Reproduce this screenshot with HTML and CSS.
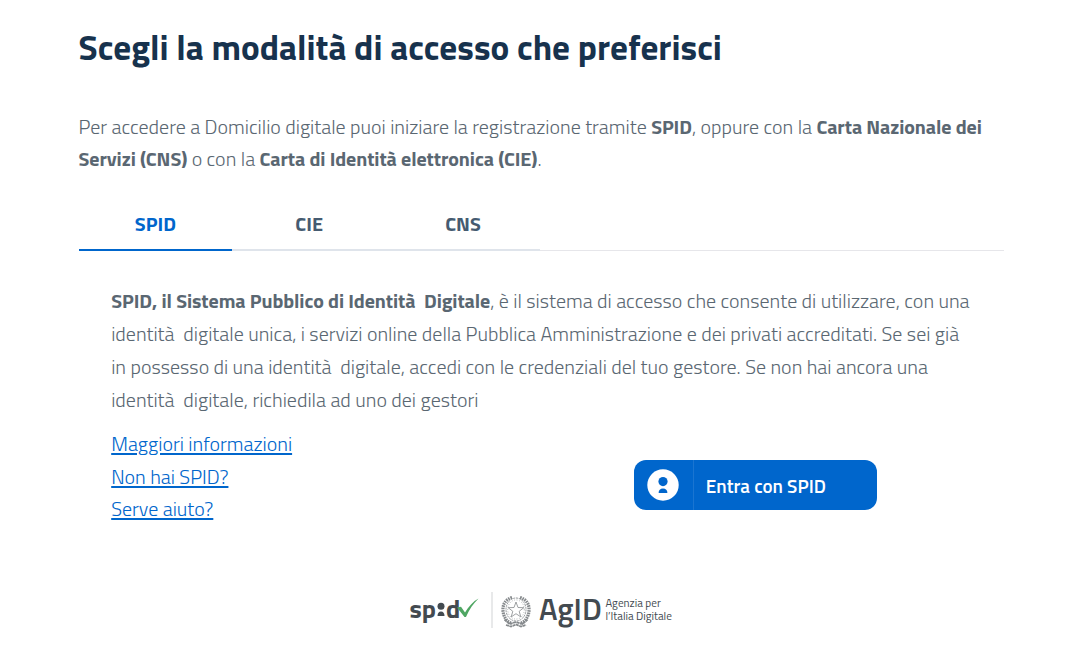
FILE: index.html
```
<!DOCTYPE html>
<html lang="it">
<head>
    <meta charset="UTF-8">
    <meta name="viewport" content="width=device-width, initial-scale=1.0">
    <title>Domicilio digitale - Accesso</title>
    <link rel="stylesheet" href="styles.css">
</head>
<body>
    <main class="container">
        <h1>Scegli la modalità di accesso che preferisci</h1>
        <p class="intro">
            Per accedere a Domicilio digitale puoi iniziare la registrazione tramite <strong>SPID</strong>, oppure con la <strong>Carta Nazionale dei Servizi (CNS)</strong> o con la <strong>Carta di Identità elettronica (CIE)</strong>.
        </p>

        <ul class="tabs">
            <li class="tab active">SPID</li>
            <li class="tab">CIE</li>
            <li class="tab">CNS</li>
        </ul>

        <section class="panel">
            <p class="description">
                <strong>SPID, il Sistema Pubblico di Identità&nbsp; Digitale</strong>, è il sistema di accesso che consente di utilizzare, con una identità&nbsp; digitale unica, i servizi online della Pubblica Amministrazione e dei privati accreditati. Se sei già in possesso di una identità&nbsp; digitale, accedi con le credenziali del tuo gestore. Se non hai ancora una identità&nbsp; digitale, richiedila ad uno dei gestori
            </p>
            <div class="actions">
                <ul class="links">
                    <li><a href="#">Maggiori informazioni</a></li>
                    <li><a href="#">Non hai SPID?</a></li>
                    <li><a href="#">Serve aiuto?</a></li>
                </ul>
                <button type="button" class="btn">
                    <span class="btn-icon">
                        <svg width="32" height="32" viewBox="0 0 32 32">
                            <circle cx="16" cy="16" r="15.7" fill="#fff"/>
                            <circle cx="16" cy="12.6" r="4.6" fill="#06c"/>
                            <path d="M11.6 24c0-3 1.600-4.600 4.400-4.600s4.400 1.600 4.400 4.600z" fill="#06c"/>
                        </svg>
                    </span>
                    <span class="btn-label">Entra con SPID</span>
                </button>
            </div>
        </section>
    </main>

    <footer class="logos">
        <div class="spid">
            <span>sp</span>
            <svg class="spid-i" width="8" height="15" viewBox="0 0 8 15">
                <circle cx="4" cy="4.200" r="3.500" fill="#434a50"/>
                <path d="M.5 14c0-3 1.300-4.500 3.500-4.500s3.500 1.500 3.500 4.500z" fill="#434a50"/>
            </svg>
            <span>d</span>
            <svg class="check" width="22" height="20" viewBox="0 0 22 20">
                <path d="M0 9.500l4-.8 4 5.800C11.500 8.500 16 3.500 21.500.5 16.500 5.500 12 11.500 9 19H7.500z" fill="#4fa663"/>
            </svg>
        </div>
        <div class="separator"></div>
        <svg class="emblem" width="30" height="34" viewBox="0 0 30 34" fill="none" stroke="#85898c">
            <path d="M11 3.500C4 5.500 1.500 11 2 17s4 11 9 12.500M19 3.500c7 2 9.500 7.500 9 13.500s-4 11-9 12.500" stroke-width="3.200" stroke-dasharray="1.600 .8"/>
            <ellipse cx="15" cy="15.500" rx="10" ry="11.500" stroke-width=".9" stroke-dasharray="2 .8"/>
            <ellipse cx="15" cy="15.500" rx="8.300" ry="9.600" stroke-width=".6" stroke-dasharray="1 1.500"/>
            <path d="M15 8l2 5.500 5.800.2-4.600 3.600 1.600 5.600-4.800-3.200-4.800 3.200 1.600-5.600-4.600-3.600 5.800-.2z" stroke-width=".8"/>
            <path d="M3.500 25.500l5 4.500 6.500-2 6.500 2 5-4.500M5 31l5 1.500 5-2 5 2 5-1.500" stroke-width="1.800" stroke-dasharray="3 .5"/>
        </svg>
        <div class="agid">AgID</div>
        <div class="agency"><div>Agenzia per</div><div>l’Italia Digitale</div></div>
    </footer>
</body>
</html>
```

FILE: styles.css
```
* {
    box-sizing: border-box;
}
body {
    margin: 0;
    background-color: #fff;
    color: #5a6772;
    font-family: "Titillium Web", Roboto, sans-serif;
    font-size: 20px;
    font-weight: 300;
    line-height: 32.8px;
}
h1, p, ul {
    margin: 0;
    padding: 0;
}
ul {
    list-style: none;
}
strong {
    font-weight: 700;
    letter-spacing: -0.09px;
}
.container {
    width: 925px;
    margin-left: 78.500px;
    padding-top: 23px;
}
h1 {
    color: #17324d;
    font-size: 35.200px;
    font-weight: 700;
    line-height: 48px;
}
.intro {
    margin-top: 39.500px;
}
.tabs {
    display: flex;
    margin-top: 22px;
    height: 53px;
    box-shadow: inset 0 -1px #e6e6ea;
}
.tab {
    width: 153.800px;
    padding-top: 10px;
    text-align: center;
    font-weight: 700;
    color: #455b71;
    border-bottom: 2px solid #dfe4eb;
}
.tab.active {
    color: #06c;
    border-bottom-color: #06c;
}
.panel {
    padding: 32.700px 32.700px 0;
}
.description {
    margin-right: -3px;
    line-height: 33px;
}
.actions {
    display: flex;
    justify-content: space-between;
    margin-top: 12px;
}
.links {
    width: 400px;
}
.links a {
    color: #06c;
    text-decoration-thickness: 2px;
    text-underline-offset: 2px;
}
.btn {
    display: flex;
    width: 243px;
    height: 50px;
    margin: 32.600px 94px 0 0;
    padding: 0;
    border: none;
    border-radius: 12px;
    background-color: #06c;
    color: #fff;
    font: inherit;
    font-size: 19px;
    font-weight: 600;
    cursor: pointer;
}
.btn-icon {
    display: flex;
    align-items: center;
    justify-content: center;
    width: 60px;
    height: 50px;
    border-right: 1px solid #1a75d1;
}
.btn-label {
    padding-left: 12px;
    line-height: 51px;
}
.logos {
    display: flex;
    margin: 66px 0 0 409.500px;
    height: 36px;
    color: #434a50;
    white-space: nowrap;
}
.spid {
    display: flex;
    width: 81.500px;
    font-size: 26px;
    font-weight: 700;
    line-height: 33px;
}
.spid-i {
    margin: 10px 1px 0;
}
.check {
    margin: 6px 0 0 -3px;
}
.separator {
    width: 2px;
    background-color: #e8e9ea;
}
.emblem {
    margin: 2px 0 0 8px;
}
.agid {
    width: 66.500px;
    margin-left: 8px;
    font-size: 31px;
    font-weight: 600;
    line-height: 34px;
}
.agency {
    font-size: 11.250px;
    font-weight: 400;
    line-height: 12.500px;
    padding-top: 5px;
}
```
